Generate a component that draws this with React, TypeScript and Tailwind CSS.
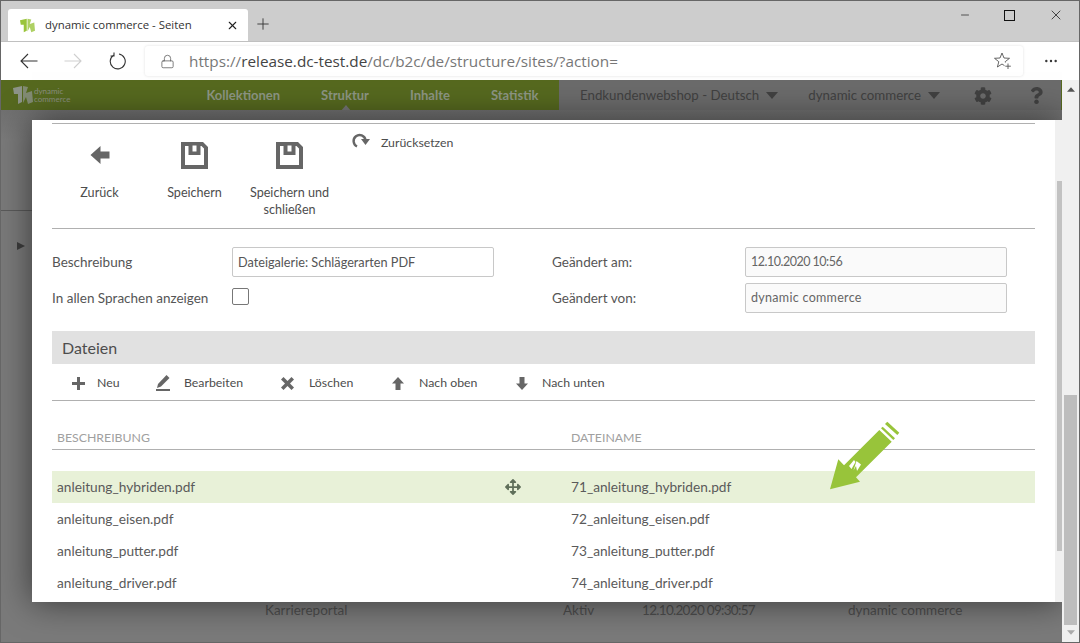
import React from "react";
import { Lock, Plus, X, Minus, MoreHorizontal } from "lucide-react";
import { FaCog, FaQuestion, FaArrowsAlt } from "react-icons/fa";

const ui = "font-['Lato','Noto_Sans',sans-serif]";

function Logo({ c = "#9ac43c", className = "" }: { c?: string; className?: string }) {
  return (
    <svg viewBox="0 0 20 20" className={className}>
      <path d="M0 3 L9 1 L9 17 L5 19 L5 9 L1 9 Z" fill={c} />
      <path d="M10 1 L15 2 L13 8 L19 6 L20 17 L15 19 L13 12 L10 18 Z" fill={c} opacity="0.8" />
    </svg>
  );
}

function Caret({ dir = "down", className = "" }: { dir?: "down" | "up" | "right"; className?: string }) {
  const d = dir === "down" ? "M0 0 H12 L6 7 Z" : dir === "up" ? "M0 7 H12 L6 0 Z" : "M0 0 L12 6 L0 12 Z";
  return (
    <svg viewBox={dir === "right" ? "0 0 12 12" : "0 0 12 7"} className={className} fill="currentColor">
      <path d={d} />
    </svg>
  );
}

function SaveIcon() {
  return (
    <svg viewBox="0 0 27 27" className="w-[27px] h-[27px]" fill="#666">
      <path
        fillRule="evenodd"
        d="M0 0 H22 L27 5 V27 H0 Z M4 4 V23 H23 V6.5 L20.5 4 H19.5 V13 H7.5 V4 Z M11.5 3.5 V9.5 H15.5 V3.5 Z"
      />
    </svg>
  );
}

function Tool({ icon, label, w }: { icon: React.ReactNode; label: React.ReactNode; w: string }) {
  return (
    <div className={`${w} flex flex-col items-center`}>
      <div className="h-[32px] flex items-center text-[#666]">{icon}</div>
      <div className="mt-[13px] text-[12.6px] leading-[17px] text-center text-[#4d4d4d]">{label}</div>
    </div>
  );
}

function Action({ icon, label, w, gap }: { icon: React.ReactNode; label: string; w: string; gap: string }) {
  return (
    <div className={`${w} flex items-center text-[12.3px] text-[#4d4d4d]`}>
      <span className="w-[15px] flex justify-center">{icon}</span>
      <span className={gap}>{label}</span>
    </div>
  );
}

function Row({ a, b, active }: { a: string; b: string; active?: boolean }) {
  return (
    <div className={`h-[32px] flex items-center text-[13.7px] text-[#5a5a5a] pl-[5px] ${active ? "bg-[#e8f1d8]" : ""}`}>
      <span className="w-[448px]">{a}</span>
      <span className="w-[66px] flex text-[#5f6f5a]">{active && <FaArrowsAlt size={16} />}</span>
      <span>{b}</span>
    </div>
  );
}

export default function App() {
  return (
    <div className={`w-[1080px] h-[643px] overflow-hidden flex flex-col bg-[#757575] relative ${ui}`}>
      {/* tab strip */}
      <div className="h-[41px] shrink-0 bg-[#cdcdcd] flex items-end pl-[8px] font-['Open_Sans',sans-serif] relative">
        <div className="w-[240px] h-[32px] bg-white rounded-t-[3px] flex items-center pl-[12px] pr-[9px]">
          <Logo className="w-[15px] h-[15px]" />
          <span className="ml-[10px] text-[11.4px] text-[#333] flex-1">dynamic commerce - Seiten</span>
          <X size={13} strokeWidth={2} className="text-[#222]" />
        </div>
        <Plus size={18} strokeWidth={1.2} className="ml-[6px] mb-[8px] text-[#333]" />
        <div className="ml-auto flex items-center h-[30px] mb-[11px] text-[#111]">
          <Minus size={12} strokeWidth={1.3} />
          <svg viewBox="0 0 11 11" className="w-[11px] h-[11px] ml-[33px]" fill="none" stroke="currentColor">
            <rect x="0.5" y="0.5" width="10" height="10" />
          </svg>
          <X size={16} strokeWidth={1.1} className="ml-[33px] mr-[16px]" />
        </div>
      </div>
      {/* address bar */}
      <div className="h-[39px] shrink-0 bg-white border-t border-t-[#c0c0c0] flex items-center pl-[20px] font-['Open_Sans',sans-serif] text-[#333]">
        <svg viewBox="0 0 18 16" className="w-[18px] h-[16px]" fill="none" stroke="currentColor" strokeWidth="1.1">
          <path d="M1 8 H17.5 M8 1 L1 8 L8 15" />
        </svg>
        <svg viewBox="0 0 18 16" className="w-[18px] h-[16px] ml-[26px] text-[#cfcfcf]" fill="none" stroke="currentColor" strokeWidth="1.1">
          <path d="M17 8 H0.5 M10 1 L17 8 L10 15" />
        </svg>
        <svg viewBox="0 0 18 18" className="w-[18px] h-[18px] ml-[26px]" fill="none" stroke="currentColor" strokeWidth="1.1">
          <path d="M11 2 A7.5 7.5 0 1 1 5.5 3.2 M6 0.5 V4 H2.5" />
        </svg>
        <div className="ml-[19px] w-[878px] h-[30px] rounded-[3px] bg-white shadow-[0_0_3px_rgba(0,0,0,0.12)] flex items-center pl-[15px] pr-[11px]">
          <Lock size={15} strokeWidth={1.2} className="text-[#555]" />
          <span className="ml-[14px] text-[15.3px] text-[#777] flex-1">
            https://<span className="text-[#444]">release.dc-test.de</span>/dc/b2c/de/structure/sites/?action=
          </span>
          <svg viewBox="0 0 18 18" className="w-[18px] h-[18px] text-[#555]" fill="none" stroke="currentColor" strokeWidth="0.9">
            <path d="M8 1 L10 6 L15.5 6.3 L11.2 9.7 L12.6 15 L8 12 L3.4 15 L4.8 9.7 L0.5 6.3 L6 6 Z" />
            <rect x="10.5" y="10.5" width="7.5" height="7.5" fill="#fff" stroke="none" />
            <path d="M14 11.5 V17 M11.3 14.2 H16.8" />
          </svg>
        </div>
        <MoreHorizontal size={16} strokeWidth={1.6} className="ml-[20px] text-[#333]" />
      </div>
      {/* dimmed page */}
      <div className="flex-1 relative bg-[linear-gradient(#666,#7a7a7a_60px)]">
        <div className="h-[30px] flex bg-[#6b6b6b] w-[1062px] border-r border-r-[#56691f] relative">
          <div className="w-[559px] bg-[#56691f] flex items-center pl-[13px] text-[#8a8f80]">
            <Logo c="#8d9488" className="w-[20px] h-[20px]" />
            <span className="ml-[1px] text-[8px] leading-[8px]">dynamic<br />commerce</span>
            <div className="ml-[136px] pt-[1px] flex gap-[41px] text-[13px] font-bold text-[#8d9684]">
              <span>Kollektionen</span>
              <span>Struktur</span>
              <span>Inhalte</span>
              <span>Statistik</span>
            </div>
          </div>
          <div className="flex-1 flex items-center pl-[21px] pt-[1px] text-[13.3px] text-[#414141]">
            <span>Endkundenwebshop - Deutsch</span>
            <Caret className="w-[12px] h-[7px] ml-[7px]" />
            <span className="ml-[30px]">dynamic commerce</span>
            <Caret className="w-[12px] h-[7px] ml-[7px]" />
            <FaCog size={18} className="ml-[34px]" />
            <FaQuestion size={17} className="ml-[36px]" />
          </div>
          <Caret dir="up" className="absolute left-[340px] bottom-0 w-[12px] h-[5px] text-[#757575]" />
        </div>
        <Caret dir="right" className="absolute left-[17px] top-[161px] w-[8px] h-[10px] text-[#3d3d3d]" />
        <div className="absolute left-0 top-[130px] w-[32px] h-px bg-[#5a5a5a]" />
        <div className="absolute left-[265px] top-[520px] flex text-[13.5px] text-[#4d4d4d]">
          <span className="w-[298px]">Karriereportal</span>
          <span className="w-[79px]">Aktiv</span>
          <span className="w-[206px] tracking-[-0.7px]">12.10.2020 09:30:57</span>
          <span>dynamic commerce</span>
        </div>
        {/* modal */}
        <div className="absolute left-[32px] top-[40px] w-[1030px] h-[482px] bg-white shadow-[0_0_32px_rgba(0,0,0,0.55)] flex overflow-hidden">
          <div className="w-[1023px] px-[20px] text-[#555]">
            <div className="w-[983px] mt-[3px] border-t border-[#b0b0b0] h-[106px] border-b flex pt-[15px]">
              <Tool
                w="w-[95px]"
                icon={
                  <svg viewBox="0 0 19 18" className="w-[20px] h-[18px]" fill="#666">
                    <path d="M0 9 L10 0 V5.5 H19 V12.5 H10 V18 Z" />
                  </svg>
                }
                label="Zurück"
              />
              <Tool w="w-[95px]" icon={<SaveIcon />} label="Speichern" />
              <Tool w="w-[95px]" icon={<SaveIcon />} label={<>Speichern und<br />schließen</>} />
              <div className="flex items-start ml-[15px] -mt-[5px] text-[12.3px] text-[#4d4d4d]">
                <svg viewBox="0 0 19 16" className="w-[19px] h-[16px] -mt-[2px]" fill="#666">
                  <path d="M5 14.5 A6 6 0 1 1 13.5 8" fill="none" stroke="#666" strokeWidth="2.4" />
                  <path d="M9 7 H18 L13.5 13 Z" />
                </svg>
                <span className="ml-[10px]">Zurücksetzen</span>
              </div>
            </div>
            <div className="w-[983px] mt-[18px] flex text-[13.5px]">
              <div className="w-[180px] flex flex-col gap-[10px]">
                <div className="h-[30px] flex items-center">Beschreibung</div>
                <div className="h-[22px] flex items-center">In allen Sprachen anzeigen</div>
              </div>
              <div className="w-[320px] flex flex-col gap-[10px]">
                <div className="w-[262px] h-[30px] border border-[#c8c8c8] rounded-[2px] flex items-center px-[5px] pt-[1px] text-[12.7px]">Dateigalerie: Schlägerarten PDF</div>
                <div className="h-[22px] flex items-center"><div className="w-[17px] h-[17px] -mt-[4px] border border-[#777] rounded-[2px]" /></div>
              </div>
              <div className="w-[193px] flex flex-col gap-[6px]">
                <div className="h-[30px] flex items-center">Geändert am:</div>
                <div className="h-[30px] flex items-center">Geändert von:</div>
              </div>
              <div className="flex flex-col gap-[6px]">
                <div className="w-[262px] h-[30px] border border-[#c8c8c8] rounded-[2px] bg-[#fafafa] flex items-center px-[5px] pt-[1px] text-[12.5px] tracking-[-0.5px] text-[#666]">12.10.2020 10:56</div>
                <div className="w-[262px] h-[30px] border border-[#c8c8c8] rounded-[2px] bg-[#fafafa] flex items-center px-[5px] pt-[1px] text-[12.5px] tracking-[0.3px] text-[#666]">dynamic commerce</div>
              </div>
            </div>
            <div className="w-[983px] mt-[18px] h-[33px] bg-[#e1e1e1] flex items-center pl-[10px] text-[16px] text-[#4d4d4d]">Dateien</div>
            <div className="w-[983px] h-[37px] border-b border-[#b0b0b0] flex items-center pl-[19px] pt-[2px]">
              <Action
                w="w-[84px]"
                gap="ml-[11px]"
                icon={
                  <svg viewBox="0 0 13 13" className="w-[13px] h-[13px]" fill="#666">
                    <path d="M5 0 H8 V5 H13 V8 H8 V13 H5 V8 H0 V5 H5 Z" />
                  </svg>
                }
                label="Neu"
              />
              <Action
                w="w-[125px]"
                gap="ml-[14px]"
                icon={
                  <svg viewBox="0 0 14 16" className="w-[14px] h-[16px]" fill="#666">
                    <path d="M10.5 0 L13.5 3 L5 11.5 L1 13 L2 9 Z" />
                    <path d="M0 14 H14 V16 H0 Z" />
                  </svg>
                }
                label="Bearbeiten"
              />
              <Action
                w="w-[110px]"
                gap="ml-[14px]"
                icon={
                  <svg viewBox="0 0 13 13" className="w-[13px] h-[13px]" fill="#666">
                    <path d="M2.5 0 L6.5 4 L10.5 0 L13 2.5 L9 6.5 L13 10.5 L10.5 13 L6.5 9 L2.5 13 L0 10.5 L4 6.5 L0 2.5 Z" />
                  </svg>
                }
                label="Löschen"
              />
              <Action
                w="w-[124px]"
                gap="ml-[14px]"
                icon={
                  <svg viewBox="0 0 12 13" className="w-[12px] h-[13px]" fill="#666">
                    <path d="M6 0 L12 6.5 H8.5 V13 H3.5 V6.5 H0 Z" />
                  </svg>
                }
                label="Nach oben"
              />
              <Action
                w="w-[110px]"
                gap="ml-[13px]"
                icon={
                  <svg viewBox="0 0 12 13" className="w-[12px] h-[13px]" fill="#666">
                    <path d="M6 13 L12 6.5 H8.5 V0 H3.5 V6.5 H0 Z" />
                  </svg>
                }
                label="Nach unten"
              />
            </div>
            <div className="w-[983px] mt-[28px] h-[21px] border-b border-[#b0b0b0] flex text-[12.3px] text-[#a0a0a0] pl-[5px] items-start">
              <span className="w-[514px]">BESCHREIBUNG</span>
              <span>DATEINAME</span>
            </div>
            <div className="w-[983px] mt-[21px]">
              <Row active a="anleitung_hybriden.pdf" b="71_anleitung_hybriden.pdf" />
              <Row a="anleitung_eisen.pdf" b="72_anleitung_eisen.pdf" />
              <Row a="anleitung_putter.pdf" b="73_anleitung_putter.pdf" />
              <Row a="anleitung_driver.pdf" b="74_anleitung_driver.pdf" />
            </div>
          </div>
          <div className="w-[7px] bg-[#f0f0f0] relative">
            <div className="absolute left-[2px] right-0 top-[61px] h-[370px] bg-[#c2c2c2]" />
          </div>
        </div>
        {/* arrow overlay */}
        <svg viewBox="0 0 70 70" className="absolute left-[830px] top-[340px] w-[70px] h-[70px]">
          <path d="M0 69.3 L8.3 39.3 L14 45.3 L49.3 10 L61.7 21.7 L26 57.3 L30 61.7 Z" fill="#98c43a" />
          <path d="M51 8.3 L52.7 6.7 L65 18.3 L63.3 20 Z" fill="#98c43a" />
          <path d="M55 4 L57.3 1.7 L69.3 12.7 L67.3 15 Z" fill="#98c43a" />
          <path d="M19 46 L24 40 L25.5 42 L21.5 49 Z M26.5 41 L31 44.5 L27 51 L26 46 L23.5 50.5 Z" fill="#fff" />
        </svg>
        {/* page scrollbar */}
        <div className="absolute right-0 top-0 bottom-0 w-[18px] bg-[#f0f0f0] flex flex-col items-center pr-[1px]">
          <Caret dir="up" className="w-[8px] h-[5px] mt-[7px] text-[#555]" />
          <div className="absolute left-[2px] w-[13px] top-[315px] bottom-[18px] bg-[#bdbdbd]" />
          <Caret className="absolute bottom-[8px] w-[8px] h-[5px] text-[#aaa]" />
        </div>
      </div>
      <div className="absolute inset-0 border border-[#666] pointer-events-none" />
    </div>
  );
}
